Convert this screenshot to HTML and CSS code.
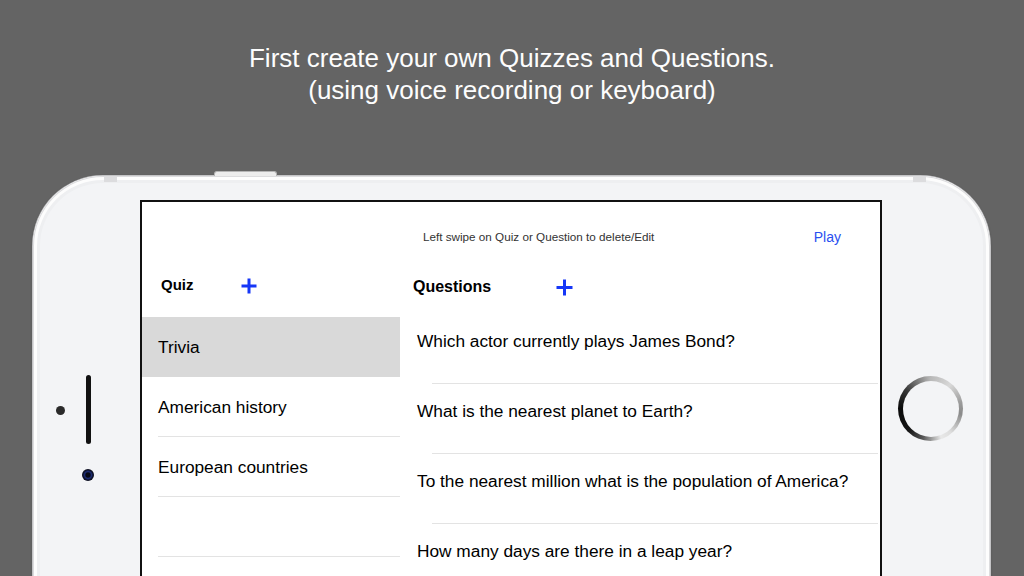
FILE: index.html
```html
<!DOCTYPE html>
<html lang="en">
<head>
<meta charset="utf-8">
<title>Quiz creator</title>
<link rel="stylesheet" href="styles.css">
</head>
<body>
<div class="page">
  <header class="caption">
    <p>First create your own Quizzes and Questions.</p>
    <p>(using voice recording or keyboard)</p>
  </header>
  <div class="phone">
    <span class="btn-top"></span>
    <span class="band band-l"></span>
    <span class="band band-r"></span>
    <div class="bezel-left">
      <span class="sensor"></span>
      <div class="speaker-col">
        <span class="speaker"></span>
        <span class="camera"></span>
      </div>
    </div>
    <div class="screen">
      <div class="topbar">
        <span class="hint">Left swipe on Quiz or Question to delete/Edit</span>
        <span class="play">Play</span>
      </div>
      <div class="columns">
        <section class="col quizzes">
          <div class="col-head">
            <h2 class="title">Quiz</h2>
            <svg class="plus" width="16" height="16" viewBox="0 0 16 16"><path d="M8 0.5V15.5M0.5 8H15.5" stroke="currentColor" stroke-width="3"/></svg>
          </div>
          <ul class="list">
            <li class="item selected">Trivia</li>
            <li class="item">American history</li>
            <li class="item">European countries</li>
            <li class="item"></li>
          </ul>
        </section>
        <section class="col questions">
          <div class="col-head">
            <h2 class="title">Questions</h2>
            <svg class="plus" width="17" height="17" viewBox="0 0 17 17"><path d="M8.5 0.5V16.5M0.5 8.5H16.5" stroke="currentColor" stroke-width="3"/></svg>
          </div>
          <ul class="list">
            <li class="q">Which actor currently plays James Bond?</li>
            <li class="q">What is the nearest planet to Earth?</li>
            <li class="q">To the nearest million what is the population of America?</li>
            <li class="q">How many days are there in a leap year?</li>
          </ul>
        </section>
      </div>
    </div>
    <div class="bezel-right">
      <span class="home"></span>
    </div>
  </div>
</div>
</body>
</html>
```

FILE: styles.css
```css
* { box-sizing: border-box; }

body {
  margin: 0;
  background: #646464;
  font-family: "Liberation Sans", Arial, sans-serif;
}

.page {
  width: 1024px;
  height: 576px;
  overflow: hidden;
}

.caption {
  padding-top: 42px;
  text-align: center;
  color: #fdfdfd;
  font-size: 26px;
  line-height: 32px;
}
.caption p { margin: 0; }

.phone {
  position: relative;
  display: flex;
  margin: 70px 0 0 33px;
  width: 957px;
  height: 430px;
  background: #f3f4f6;
  border-radius: 70px 70px 0 0;
  box-shadow:
    0 0 0 1px #c4c4c6,
    0 1px 3px rgba(0,0,0,0.35),
    inset 0 0 0 1px #dcdcde,
    inset 0 0 0 4px #fdfdfd,
    inset 0 0 0 7px #eeeff1;
}

.btn-top {
  position: absolute;
  left: 181px;
  top: -5px;
  width: 63px;
  height: 5px;
  background: #ececec;
  border: 1px solid #b5b5b5;
  border-bottom: 0;
  border-radius: 3px 3px 0 0;
}

.band {
  position: absolute;
  top: 0;
  width: 13px;
  height: 6px;
  background: #dcdcde;
}
.band-l { left: 71px; }
.band-r { left: 880px; }

.bezel-left {
  flex: none;
  width: 107px;
  display: flex;
  align-items: flex-start;
  padding-top: 199px;
}

.sensor {
  width: 9px;
  height: 9px;
  margin: 31px 0 0 23px;
  border-radius: 50%;
  background: #2a2a2a;
}

.speaker-col {
  display: flex;
  flex-direction: column;
  align-items: center;
  margin-left: 17px;
}

.speaker {
  width: 5px;
  height: 69px;
  border-radius: 3px;
  background: #111;
}

.camera {
  width: 12px;
  height: 12px;
  margin-top: 25px;
  border-radius: 50%;
  background: radial-gradient(circle, #070814 0 25%, #1d2d78 40%, #0c0f25 60%, #050505 100%);
}

.screen {
  flex: none;
  width: 742px;
  margin-top: 24px;
  background: #fff;
  border: 2px solid #111;
  border-bottom: 0;
}

.topbar {
  display: flex;
  align-items: flex-start;
  height: 62px;
  padding-top: 27px;
  line-height: 16px;
}

.hint {
  margin-left: 281px;
  font-size: 11.7px;
  color: #333;
}

.play {
  margin-left: auto;
  margin-right: 39px;
  font-size: 14px;
  color: #2a4ff0;
}

.columns { display: flex; }

.quizzes { width: 258px; flex: none; }
.questions { flex: 1; }

.col-head {
  display: flex;
  align-items: center;
  line-height: 20px;
}

.title {
  margin: 0;
  font-weight: bold;
  color: #000;
}

.plus { color: #1637f7; flex: none; }

.quizzes .col-head { height: 53px; padding-top: 11px; align-items: flex-start; }
.quizzes .title { width: 80px; margin-left: 19px; font-size: 15px; }
.quizzes .plus { margin-top: 3px; }

.questions .col-head { height: 50px; padding-top: 13px; align-items: flex-start; }
.questions .title { width: 143px; margin-left: 13px; font-size: 16px; }
.questions .plus { margin-top: 2px; }

.list {
  margin: 0;
  padding: 0;
  list-style: none;
  color: #000;
}

.item {
  height: 60px;
  line-height: 60px;
  padding-left: 16px;
  font-size: 17.3px;
  background: linear-gradient(#e3e3e3, #e3e3e3) no-repeat 16px 100% / calc(100% - 16px) 1px;
}
.item.selected { background: #d9d9d9; }

.q {
  height: 70px;
  padding: 17px 0 0 17px;
  line-height: 20px;
  font-size: 17.3px;
  background: linear-gradient(#e3e3e3, #e3e3e3) no-repeat 32px 100% / calc(100% - 34px) 1px;
}

.bezel-right {
  flex: none;
  width: 108px;
  padding: 200px 0 0 16px;
}

.home {
  display: block;
  position: relative;
  width: 65px;
  height: 65px;
  border-radius: 50%;
  background: conic-gradient(from 0deg, #b8b8b8 0deg, #d8d8d8 40deg, #9a9a9a 80deg, #8a8a8a 100deg, #dedede 140deg, #e8e8e8 160deg, #555 195deg, #151515 225deg, #0a0a0a 270deg, #333 305deg, #888 340deg, #b8b8b8 360deg);
}
.home::after {
  content: "";
  position: absolute;
  inset: 4.5px;
  border-radius: 50%;
  background: #f3f4f6;
}
```
